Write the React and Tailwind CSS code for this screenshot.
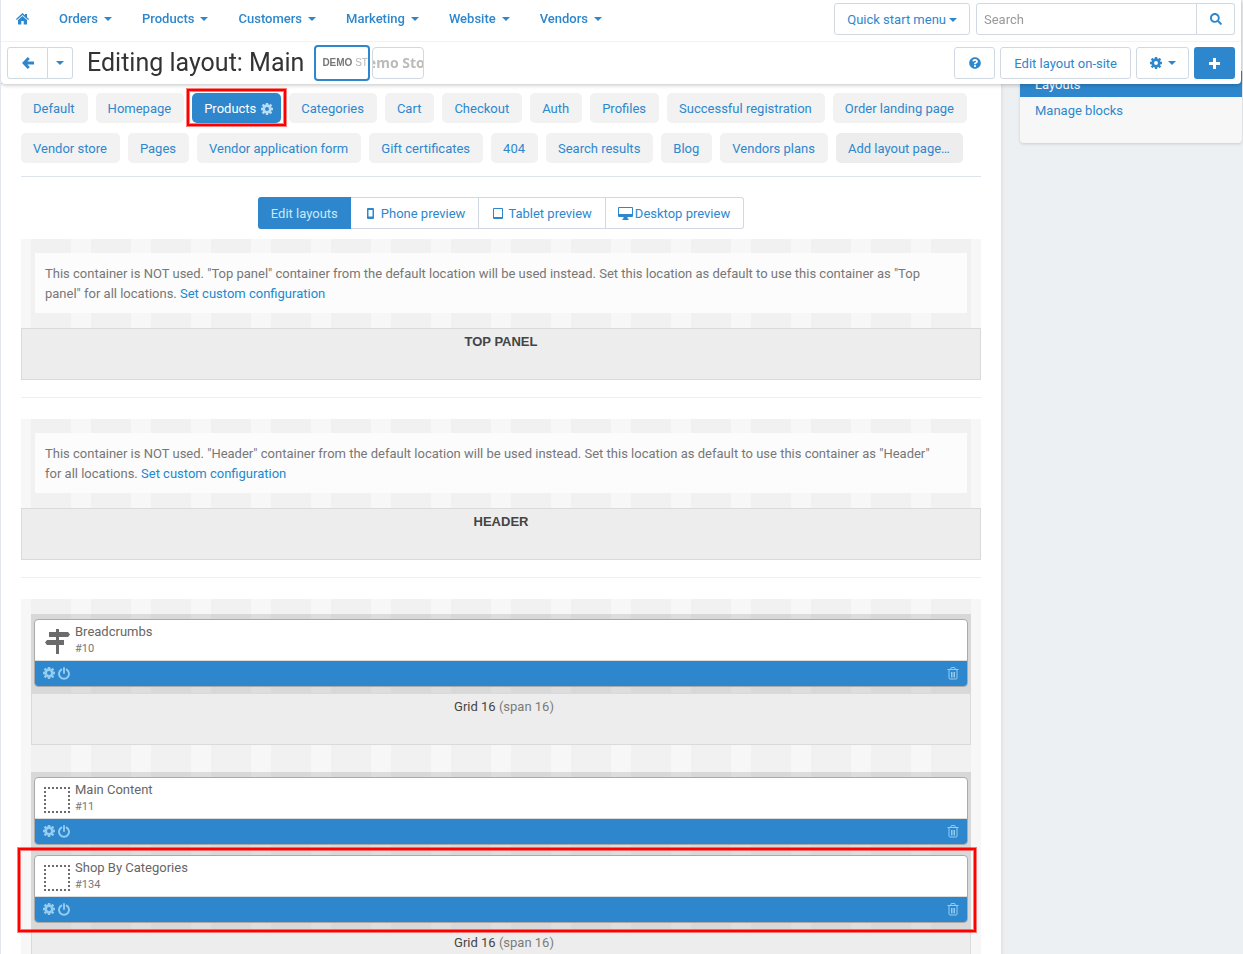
import { useState } from 'react';
import { FaQuestionCircle, FaSearch } from 'react-icons/fa';

const NAV = ['Orders', 'Products', 'Customers', 'Marketing', 'Website', 'Vendors'];

const PAGES = [
  'Default', 'Homepage', 'Products', 'Categories', 'Cart', 'Checkout', 'Auth', 'Profiles',
  'Successful registration', 'Order landing page', 'Vendor store', 'Pages',
  'Vendor application form', 'Gift certificates', '404', 'Search results', 'Blog', 'Vendors plans',
];

const btn = 'flex h-8 items-center justify-center rounded-[3px] border border-[#d0d9e1] bg-white text-[#2e87cd]';
const tab = 'h-[30px] rounded-[5px] pt-px pr-[13px] pl-3 text-[#2e87cd]';
const highlight = 'pointer-events-none absolute border-2 border-[#ff0000] shadow-[0_0_0_1px_rgba(255,0,0,0.5),inset_0_0_0_1px_rgba(255,0,0,0.5)]';
const stripes = 'bg-[repeating-linear-gradient(90deg,#f7f7f7_0_10px,#f1f1f1_10px_50px,#f7f7f7_50px_60px)]';

function Caret() {
  return (
    <svg width="8" height="4" viewBox="0 0 8 4" fill="currentColor" aria-hidden="true">
      <path d="M0 0h8L4 4z" />
    </svg>
  );
}

function HomeIcon() {
  return (
    <svg width="13" height="12" viewBox="0 0 13 12" fill="currentColor" aria-hidden="true">
      <path d="M6.500 0L9 2.300V1h2v3.200l2 1.800-.8.900L6.500 1.900.8 6.900 0 6z" />
      <path d="M6.500 3L11 7v4.500H7.700V8H5.300v3.500H2V7z" />
    </svg>
  );
}

function ArrowIcon() {
  return (
    <svg width="12" height="12" viewBox="0 0 12 12" fill="none" stroke="currentColor" strokeWidth="2.800" aria-hidden="true">
      <path d="M6.800 1L1.900 6l4.900 5M2 6h10" />
    </svg>
  );
}

function GearIcon({ className = '' }) {
  return (
    <svg width="12" height="12" viewBox="0 0 12 12" fill="none" stroke="currentColor" className={className} aria-hidden="true">
      <circle cx="6" cy="6" r="3.300" strokeWidth="2.700" />
      <path strokeWidth="2.400" d="M6 0v2.500M6 9.500V12M0 6h2.500M9.500 6H12M1.600 1.600l1.700 1.700M8.700 8.700l1.700 1.700M10.400 1.600L8.700 3.300M3.300 8.700l-1.700 1.700" />
    </svg>
  );
}

function PowerIcon() {
  return (
    <svg width="12" height="13" viewBox="0 0 12 13" fill="none" stroke="currentColor" strokeWidth="1.900" strokeLinecap="round" aria-hidden="true">
      <path d="M3.300 2.600a5 5 0 1 0 5.400 0M6 1v5" />
    </svg>
  );
}

function PlusIcon() {
  return (
    <svg width="11" height="11" viewBox="0 0 11 11" stroke="currentColor" strokeWidth="3" aria-hidden="true">
      <path d="M5.500 0v11M0 5.500h11" />
    </svg>
  );
}

function PhoneIcon() {
  return (
    <svg width="8" height="12" viewBox="0 0 8 12" fill="currentColor" aria-hidden="true">
      <path fillRule="evenodd" d="M1 0h5a1 1 0 0 1 1 1v9a1 1 0 0 1-1 1H1a1 1 0 0 1-1-1V1a1 1 0 0 1 1-1zM1.500 2v6.500h4V2z" />
    </svg>
  );
}

function TabletIcon() {
  return (
    <svg width="10" height="12" viewBox="0 0 10 12" fill="currentColor" aria-hidden="true">
      <path fillRule="evenodd" d="M1 0h8a1 1 0 0 1 1 1v9a1 1 0 0 1-1 1H1a1 1 0 0 1-1-1V1a1 1 0 0 1 1-1zM1 1v8h8V1z" />
    </svg>
  );
}

function DesktopIcon() {
  return (
    <svg width="15" height="14" viewBox="0 0 15 14" fill="currentColor" aria-hidden="true">
      <path fillRule="evenodd" d="M1 0h13a1 1 0 0 1 1 1v8a1 1 0 0 1-1 1H9.500v1.500h1V13h-6v-1.500h1V10H1a1 1 0 0 1-1-1V1a1 1 0 0 1 1-1zM1 1v6h13V1z" />
    </svg>
  );
}

function TrashIcon() {
  return (
    <svg width="12" height="13" viewBox="0 0 12 13" fill="none" stroke="currentColor" aria-hidden="true">
      <path d="M.5 2.500h11M3.500 2.500l.8-2h3.400l.8 2M2 2.500v8.500a1 1 0 0 0 1 1h6a1 1 0 0 0 1-1V2.500M4.500 5v5.500M6 5v5.500M7.500 5v5.500" />
    </svg>
  );
}

function SignpostIcon() {
  return (
    <svg width="26" height="26" viewBox="0 0 26 26" fill="currentColor" aria-hidden="true">
      <path d="M12 0h3v25h-3z" />
      <path d="M5 3h19l2 2.500L24 8H5zM20 11H3l-2 2.500L3 16h17z" />
    </svg>
  );
}

function EmptyBlockIcon() {
  return (
    <svg width="26" height="26" viewBox="0 0 26 26" fill="none" stroke="currentColor" strokeWidth="2" aria-hidden="true">
      <path strokeDasharray="2 2" d="M0 1h26M0 25h26M1 4v20M25 4v20" />
    </svg>
  );
}

function Header() {
  return (
    <header className="sticky top-0 z-10 mr-[2px] rounded-b-[4px] bg-white shadow-[0_1px_4px_rgba(0,0,0,0.25)]">
      <div className="flex h-[42px] items-start justify-between border-b border-[#f2f2f2] pt-[3px] pr-[6px]">
        <nav className="flex h-8 items-center gap-[30px] pl-[15px] text-[#2e87cd]">
          <a href="#home" aria-label="Home"><HomeIcon /></a>
          {NAV.map(item => (
            <a key={item} href="#menu" className="flex items-center gap-[6px] font-medium">
              {item}
              <Caret />
            </a>
          ))}
        </nav>
        <div className="flex gap-[6px]">
          <button className={`${btn} gap-[3px] px-3 pt-px`}>
            Quick start menu
            <Caret />
          </button>
          <form className="flex" onSubmit={e => e.preventDefault()}>
            <input
              type="search"
              aria-label="Search"
              placeholder="Search"
              className="h-8 w-[221px] rounded-l-[3px] border border-[#d0d9e1] px-[7px] outline-none placeholder:text-[#999]"
            />
            <button aria-label="Find" className="flex h-8 w-[38px] items-center justify-center rounded-r-[3px] border border-l-0 border-[#d0d9e1] text-[#2e87cd]">
              <FaSearch size={12} />
            </button>
          </form>
        </div>
      </div>

      <div className="flex h-[42px] items-center justify-between px-[6px]">
        <div className="flex items-center">
          <div className="flex">
            <button aria-label="Back" className="flex h-8 w-[41px] items-center justify-center rounded-l-[3px] border border-[#d0d9e1] text-[#2e87cd]">
              <ArrowIcon />
            </button>
            <button aria-label="Recent pages" className="flex h-8 w-[25px] items-center justify-center rounded-r-[3px] border border-l-0 border-[#d0d9e1] text-[#2e87cd]">
              <Caret />
            </button>
          </div>
          <h1 className="ml-[14px] text-[25px] leading-8 text-[#333]">Editing layout: Main</h1>
          <div className="ml-[10px] flex items-center gap-[2px]">
            <button className="flex h-9 w-14 items-center overflow-hidden rounded-[4px] border-2 border-[#2e87cd] pl-[6px] font-[Liberation_Sans] text-[10px] whitespace-nowrap text-[#b5b5b5]">
              <b className="text-[#777]">DEMO</b>&nbsp;STORE
            </button>
            <button className="flex h-8 w-[52px] items-center justify-center overflow-hidden rounded-[4px] border border-[#d0d9e1] font-[Noto_Sans] text-[14px] font-bold whitespace-nowrap text-[#bbb]">
              Demo Store
            </button>
          </div>
        </div>
        <div className="flex gap-[5px]">
          <button aria-label="Help" className={`${btn} w-[41px]`}><FaQuestionCircle size={12} /></button>
          <button className={`${btn} px-[13px] pt-px`}>Edit layout on-site</button>
          <button aria-label="Settings" className={`${btn} w-[53px] gap-[6px]`}>
            <GearIcon />
            <Caret />
          </button>
          <button aria-label="Add" className="flex h-8 w-[41px] items-center justify-center rounded-[3px] bg-[#2e87cd] text-white">
            <PlusIcon />
          </button>
        </div>
      </div>
    </header>
  );
}

function PageTabs() {
  const [active, setActive] = useState('Products');

  return (
    <div className="flex flex-wrap gap-x-2 gap-y-[10px] border-b border-[#dde4ec] pb-[13px]">
      {PAGES.map(page =>
        page === active ? (
          <div key={page} className="relative">
            <button className="flex h-[30px] items-center gap-[5px] rounded-[5px] bg-[#2e87cd] pt-px pr-2 pl-3 text-white">
              {page}
              <GearIcon className="text-[#b9dcf5]" />
            </button>
            {page === 'Products' && <span className={`${highlight} -top-1 -right-[5px] -bottom-[3px] -left-[5px]`} />}
          </div>
        ) : (
          <button key={page} onClick={() => setActive(page)} className={`${tab} bg-[#f2f2f2]`}>
            {page}
          </button>
        )
      )}
      <button className={`${tab} bg-[#ededed]`}>Add layout page…</button>
    </div>
  );
}

function PreviewSwitch() {
  const item = 'flex h-8 items-center border border-l-0 border-[#d0d9e1] pt-px pr-[13px] text-[#2e87cd]';

  return (
    <div className="mt-5 mb-[10px] flex justify-center">
      <button className="h-8 rounded-l-[3px] bg-[#2e87cd] px-[13px] pt-px text-[#c9e8fb]">Edit layouts</button>
      <button className={`${item} gap-[6px] pl-4`}><PhoneIcon />Phone preview</button>
      <button className={`${item} gap-[5px] pl-[14px]`}><TabletIcon />Tablet preview</button>
      <button className={`${item} gap-[2px] rounded-r-[3px] pl-3`}><DesktopIcon />Desktop preview</button>
    </div>
  );
}

function UnusedContainer({ name, title }) {
  return (
    <section className="mb-[21px] border-b border-[#eee] pb-[17px]">
      <div className={`${stripes} px-[14px] pt-[14px] pb-[15px]`}>
        <p className="bg-[#fcfcfc] pt-[11px] pr-5 pb-[9px] pl-[10px] text-[#777]">
          {`This container is NOT used. "${name}" container from the default location will be used instead. Set this location as default to use this container as "${name}" for all locations. `}
          <a href="#configure" className="text-[#2089d0]">Set custom configuration</a>
        </p>
      </div>
      <h2 className="h-[52px] border border-[#dadada] bg-[#ededed] pt-[3px] text-center font-[Liberation_Sans] font-bold text-[#444]">
        {title}
      </h2>
    </section>
  );
}

function Block({ name, id, icon, marked }) {
  return (
    <div className="relative rounded-[4px] border border-[#aaa] bg-white">
      <div className="flex h-[41px] items-start border-b border-[#ddd] pl-[9px]">
        <span className="flex h-[41px] w-[31px] items-center pt-[2px] text-[#6b6b6b]">{icon}</span>
        <div className="pt-1">
          <div className="leading-4 text-[#666]">{name}</div>
          <div className="text-[11px] leading-[18px] text-[#777]">{id}</div>
        </div>
      </div>
      <div className="flex h-[25px] items-center rounded-b-[3px] bg-[#2e87cd] px-2 pb-px text-[#94cdf0]">
        <button aria-label="Block settings"><GearIcon /></button>
        <button aria-label="Toggle block" className="ml-[3px]"><PowerIcon /></button>
        <button aria-label="Remove block" className="ml-auto"><TrashIcon /></button>
      </div>
      {marked && <span className={`${highlight} -top-2 -right-[9px] -bottom-[10px] -left-[17px]`} />}
    </div>
  );
}

function Grid({ children }) {
  return (
    <section>
      <div className="flex flex-col gap-[10px] bg-black/10 px-[3px] pt-[5px] pb-[6px]">{children}</div>
      <h3 className="h-[52px] border border-[#dadada] bg-[#ededed] pt-[3px] pl-[6px] text-center text-[#444]">
        Grid 16 <span className="text-[#7b7b7b]">(span 16)</span>
      </h3>
    </section>
  );
}

export default function App() {
  return (
    <div className="h-screen overflow-hidden border-l border-[#e2e6ec] bg-[#ecf0f3] font-[Roboto,sans-serif] text-[13px] leading-5">
      <Header />
      <div className="flex items-stretch">
        <main className="min-h-screen flex-1 bg-white px-5 pt-[9px] shadow-[0_0_4px_rgba(0,0,0,0.12)]">
          <PageTabs />
          <PreviewSwitch />
          <UnusedContainer name="Top panel" title="TOP PANEL" />
          <UnusedContainer name="Header" title="HEADER" />
          <div className={`${stripes} flex flex-col gap-[27px] px-[10px] py-[15px]`}>
            <Grid>
              <Block name="Breadcrumbs" id="#10" icon={<SignpostIcon />} />
            </Grid>
            <Grid>
              <Block name="Main Content" id="#11" icon={<EmptyBlockIcon />} />
              <Block name="Shop By Categories" id="#134" icon={<EmptyBlockIcon />} marked />
            </Grid>
          </div>
        </main>
        <aside className="w-[242px] pr-px pl-[19px]">
          <ul className="-mt-[13px] rounded-b-[4px] bg-[#f7f7f7] pb-5 shadow-[0_1px_3px_rgba(0,0,0,0.15)]">
            <li><a href="#layouts" className="block bg-[#2e87cd] px-[15px] pt-1 pb-[2px] text-white">Layouts</a></li>
            <li><a href="#blocks" className="block px-[15px] pt-1 pb-[2px] text-[#2e87cd]">Manage blocks</a></li>
          </ul>
        </aside>
      </div>
    </div>
  );
}
